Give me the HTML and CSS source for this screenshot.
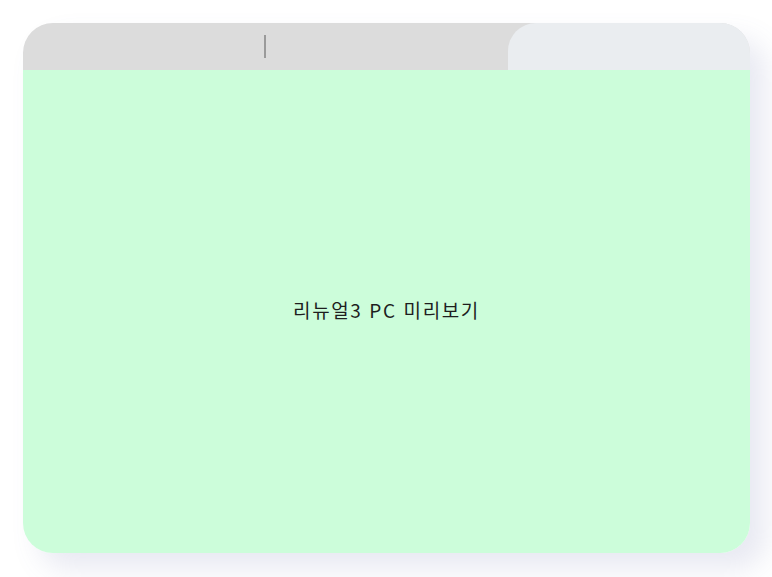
FILE: index.html
```html
<!DOCTYPE html>
<html lang="ko">
<head>
<meta charset="utf-8">
<link rel="stylesheet" href="styles.css">
</head>
<body>
<div class="page">
  <div class="window">
    <div class="tabbar">
      <div class="tab-left"><span class="caret"></span></div>
      <div class="tab-right"></div>
    </div>
    <div class="content">리뉴얼3 PC 미리보기</div>
  </div>
</div>
</body>
</html>
```
FILE: styles.css
```css
html, body { margin: 0; padding: 0; background: #fff; }
.page {
  box-sizing: border-box;
  width: 772px;
  height: 577px;
  padding: 23px 22px 0 23px;
  overflow: hidden;
}
.window {
  width: 727px;
  height: 530px;
  border-radius: 30px;
  overflow: hidden;
  display: flex;
  flex-direction: column;
  box-shadow: 16px 16px 28px rgba(100, 110, 170, 0.15);
}
.tabbar {
  height: 47px;
  display: flex;
  background: #dcdcdc;
}
.tab-left {
  width: 485px;
  position: relative;
}
.caret {
  position: absolute;
  left: 241px;
  top: 12px;
  width: 2px;
  height: 23px;
  background: #9a9a9a;
}
.tab-right {
  flex: 1;
  background: #eaedf0;
  border-top-left-radius: 28px;
}
.content {
  flex: 1;
  background: #ccfdda;
  display: flex;
  align-items: center;
  justify-content: center;
  font-family: "Noto Sans CJK KR", "Noto Sans", sans-serif;
  font-size: 19px;
  letter-spacing: 1.6px;
  color: #1e1e1e;
  padding-bottom: 4px;
}
```
